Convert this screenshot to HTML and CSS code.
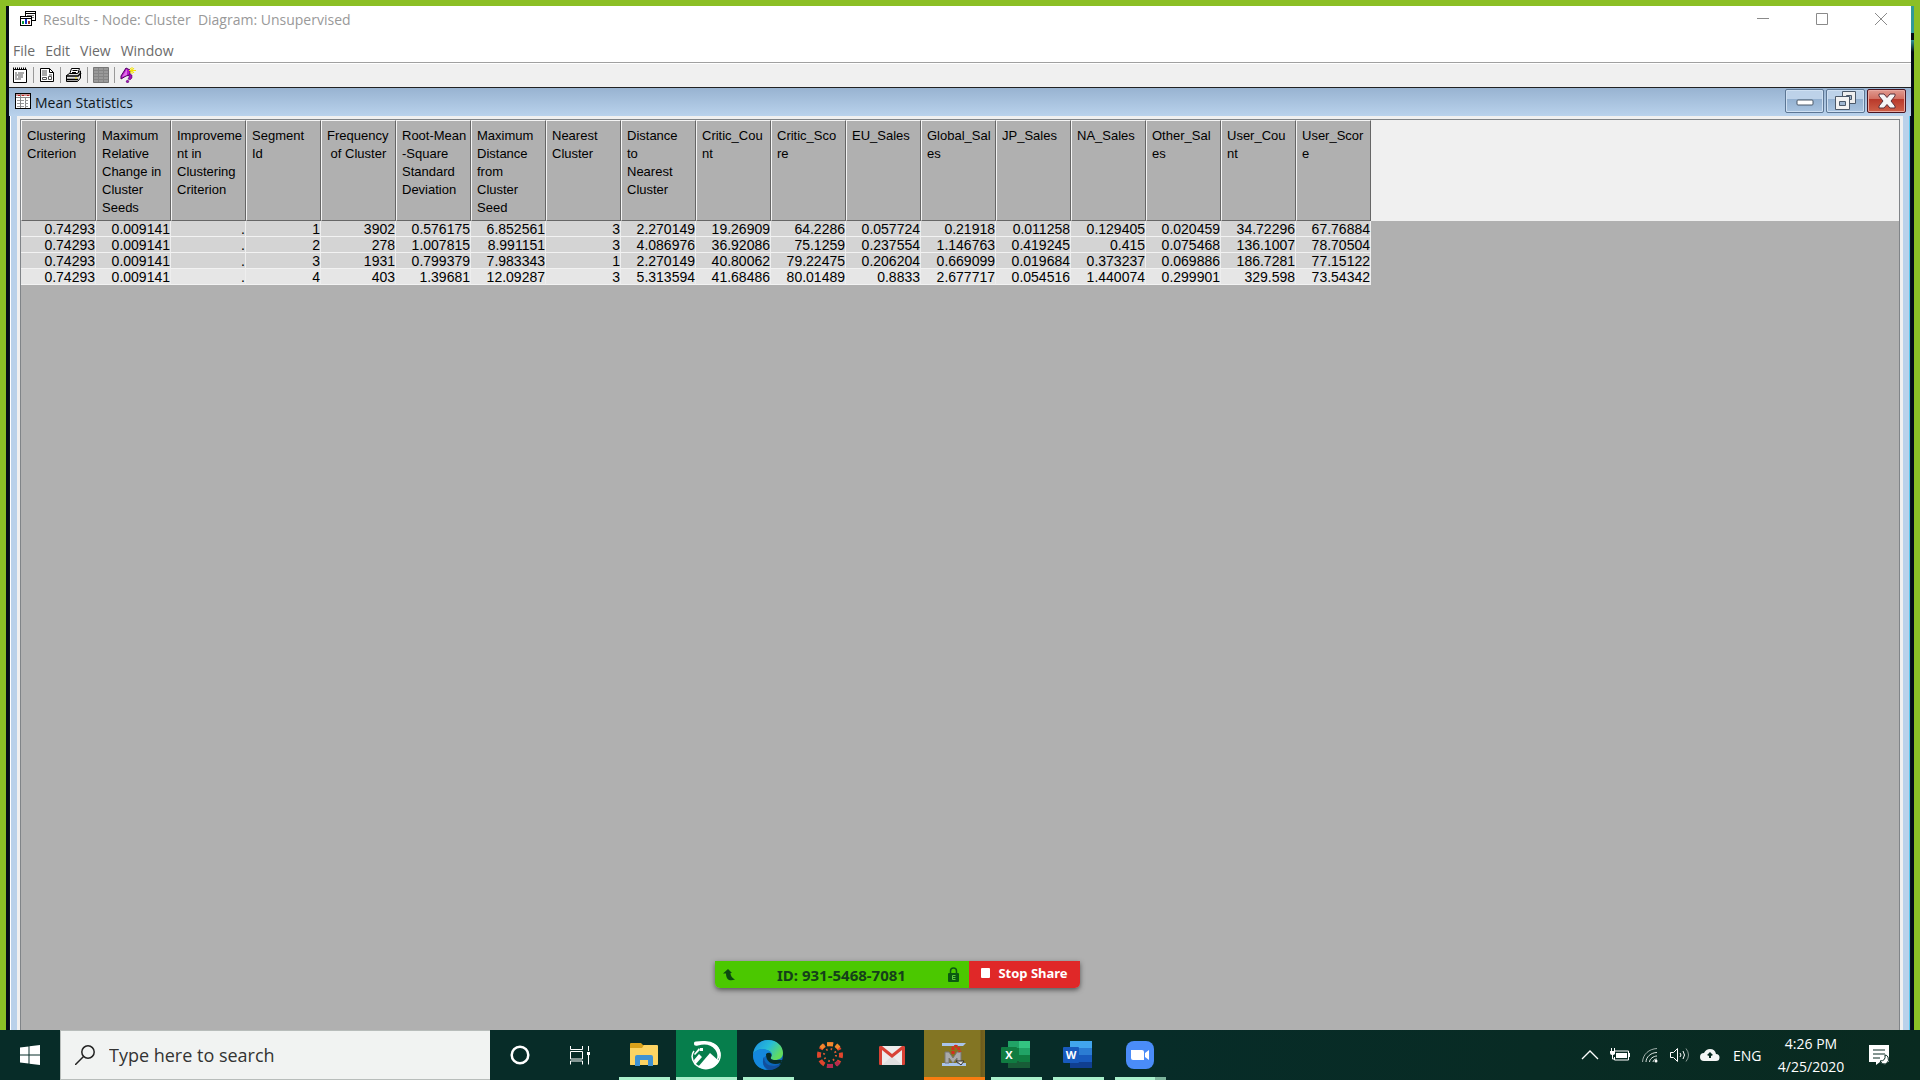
FILE: index.html
```html
<!DOCTYPE html>
<html lang="en">
<head>
<meta charset="utf-8">
<title>Results - Node: Cluster  Diagram: Unsupervised</title>
<link rel="stylesheet" href="styles.css">
</head>
<body>
<div class="desktop">
  <main class="window">
    <header class="titlebar">
      <svg class="app-icon" viewBox="0 0 16 16" shape-rendering="crispEdges"><path d="M5 .5h10.500v9H5zM5 2h10" fill="#fff" stroke="#000"/><path d="M7 4h7M12 6h2" stroke="#777"/><path d="M.5 5.500h11v9H.5z" fill="#fff" stroke="#000" stroke-width="1.500"/><path d="M0 7h12" stroke="#000"/><path d="M2 10h2v3H2z" fill="#0a9a3c"/><path d="M5 8h2v5H5z" fill="#1230c8"/><path d="M8 10h2v3H8z" fill="#a03020"/></svg>
      <h1 class="title">Results - Node: Cluster&nbsp; Diagram: Unsupervised</h1>
      <div class="controls">
        <button class="ctl" aria-label="Minimize"><svg viewBox="0 0 12 12"><path d="M0 5.500h12"/></svg></button>
        <button class="ctl" aria-label="Maximize"><svg viewBox="0 0 12 12"><path d="M.5.5h11v11H.5z"/></svg></button>
        <button class="ctl" aria-label="Close"><svg viewBox="0 0 12 12"><path d="M0 0l12 12M12 0L0 12"/></svg></button>
      </div>
    </header>
    <nav class="menu">
      <button>File</button><button>Edit</button><button>View</button><button>Window</button>
    </nav>
    <div class="toolbar">
      <button aria-label="Properties"><svg viewBox="0 0 16 16"><path d="M1.500 2.500h13v13h-13z" fill="#fff" stroke="#000"/><path d="M1 1.500h14" stroke="#000" stroke-width="2" stroke-dasharray="1 1"/><path d="M3 6h2M6 6h6M3 8h8M3 10h2M6 10h5M3 12h6" stroke="#555"/></svg></button>
      <button aria-label="Report"><svg viewBox="0 0 16 16"><path d="M1.500 1.500h9l4 4v9h-13z" fill="#fff" stroke="#000"/><path d="M10.500 1.500v4h4" fill="none" stroke="#000"/><path d="M3 4h5M3 6h5M3 8h5M10 8h3" stroke="#555"/><path d="M3.500 10.500h4v2h-4zM9.500 9.500h3v3h-3z" fill="none" stroke="#555"/></svg></button>
      <button aria-label="Print"><svg viewBox="0 0 16 16"><path d="M5.500 1.500h8l-2 6h-8z" fill="#fff" stroke="#000"/><path d="M6.500 3.500h5M6 5.500h4" stroke="#000"/><path d="M.5 8.500l3-2h8l3-2.500v7l-3 3.500H.5z" fill="#ddd" stroke="#000"/><path d="M0 9h12l3-3M1 12.500h11" fill="none" stroke="#000" stroke-width="1.500"/><path d="M9 11h2" stroke="#ffe600"/></svg></button>
      <button aria-label="Table" disabled><svg viewBox="0 0 16 16"><path d="M.5.5h15v15H.5z" fill="#999" stroke="#777"/><path d="M1 3.500h14M1 6.500h14M1 9.500h14M1 12.500h14M5.500 1v14M10.500 1v14" stroke="#858585"/></svg></button>
      <button aria-label="Help"><svg viewBox="0 0 16 16"><path d="M6 1l4 2v5l-4 1-5 3V9z" fill="#b818c8" stroke="#500060"/><path d="M2 10l5-8v6z" fill="#e070e8"/><path d="M9 7l3 1v3l-2 2-2-1 1-2zM7 13l2 1-1 2-2-1z" fill="#a010b8" stroke="#500060" stroke-width=".5"/><path d="M12 0v7M9 3.500h7M10 1l4 5M14 1l-4 5" stroke="#f4e400"/></svg></button>
    </div>
    <section class="mdi">
      <header class="mdi-title">
        <svg class="mdi-icon" viewBox="0 0 16 16" shape-rendering="crispEdges"><path d="M.5.5h15v15H.5z" fill="#fff" stroke="#000"/><path d="M1 2h14" stroke="#c99" stroke-width="2"/><path d="M3 2h2M7 2h2M12 2h2" stroke="#b22" stroke-width="1"/><path d="M1 4.500h14M5.500 1v14M10.500 4v11" stroke="#888"/><path d="M2 7.500h12M2 10.500h12M2 13.500h12" stroke="#999" stroke-dasharray="3 1"/></svg>
        <h2 class="title2">Mean Statistics</h2>
        <div class="mdi-controls">
          <button class="mbtn" aria-label="Minimize table"><svg viewBox="0 0 18 22"><rect x="1" y="10" width="16" height="5" rx="1" fill="#fff" stroke="#4b5868"/></svg></button>
          <button class="mbtn" aria-label="Restore table"><svg viewBox="0 0 22 22"><path d="M7.500 1.500h13v12h-13z" fill="#eee" stroke="#4b5868"/><path d="M11.500 5.500h5v4h-5z" fill="#9fb6d0" stroke="#4b5868"/><path d="M.5 6.500h14v13H.5z" fill="#f2f2f2" stroke="#4b5868"/><path d="M4.500 11.500h6v4h-6z" fill="#9fb6d0" stroke="#4b5868"/></svg></button>
          <button class="mbtn close" aria-label="Close table"><svg viewBox="0 0 18 22"><path d="M1 4h5l3 3.500L12 4h5v2l-4 5 4 5v2h-5l-3-3.500L6 18H1v-2l4-5-4-5z" fill="#f6f6f6" stroke="#59303a"/></svg></button>
        </div>
      </header>
      <div class="mdi-body">
        <div class="sheet">
          <table class="stats">
            <thead><tr>
              <th>Clustering<br>Criterion</th><th>Maximum<br>Relative<br>Change in<br>Cluster<br>Seeds</th><th>Improveme<br>nt in<br>Clustering<br>Criterion</th><th>Segment<br>Id</th><th>Frequency<br>&nbsp;of Cluster</th><th>Root-Mean<br>-Square<br>Standard<br>Deviation</th><th>Maximum<br>Distance<br>from<br>Cluster<br>Seed</th><th>Nearest<br>Cluster</th><th>Distance<br>to<br>Nearest<br>Cluster</th><th>Critic_Cou<br>nt</th><th>Critic_Sco<br>re</th><th>EU_Sales</th><th>Global_Sal<br>es</th><th>JP_Sales</th><th>NA_Sales</th><th>Other_Sal<br>es</th><th>User_Cou<br>nt</th><th>User_Scor<br>e</th>
            </tr></thead>
            <tbody>
              <tr><td>0.74293</td><td>0.009141</td><td>.</td><td>1</td><td>3902</td><td>0.576175</td><td>6.852561</td><td>3</td><td>2.270149</td><td>19.26909</td><td>64.2286</td><td>0.057724</td><td>0.21918</td><td>0.011258</td><td>0.129405</td><td>0.020459</td><td>34.72296</td><td>67.76884</td></tr>
              <tr><td>0.74293</td><td>0.009141</td><td>.</td><td>2</td><td>278</td><td>1.007815</td><td>8.991151</td><td>3</td><td>4.086976</td><td>36.92086</td><td>75.1259</td><td>0.237554</td><td>1.146763</td><td>0.419245</td><td>0.415</td><td>0.075468</td><td>136.1007</td><td>78.70504</td></tr>
              <tr><td>0.74293</td><td>0.009141</td><td>.</td><td>3</td><td>1931</td><td>0.799379</td><td>7.983343</td><td>1</td><td>2.270149</td><td>40.80062</td><td>79.22475</td><td>0.206204</td><td>0.669099</td><td>0.019684</td><td>0.373237</td><td>0.069886</td><td>186.7281</td><td>77.15122</td></tr>
              <tr><td>0.74293</td><td>0.009141</td><td>.</td><td>4</td><td>403</td><td>1.39681</td><td>12.09287</td><td>3</td><td>5.313594</td><td>41.68486</td><td>80.01489</td><td>0.8833</td><td>2.677717</td><td>0.054516</td><td>1.440074</td><td>0.299901</td><td>329.598</td><td>73.54342</td></tr>
            </tbody>
          </table>
          <div class="header-rest"></div>
        </div>
      </div>
    </section>
  </main>
  <div class="share">
    <div class="share-id">
      <svg viewBox="0 0 12 12" width="12" height="12"><path d="M0 4.500L5 0l4 4H7.500c0 3 1.500 5 4.500 6.500-5 2-9 .5-9-6z" fill="#0b4a10"/></svg>
      <span>ID: 931-5468-7081</span>
      <svg viewBox="0 0 11 15" width="11" height="15"><path d="M2.500 7V4a3 3 0 016 0v3" fill="none" stroke="#0b5a10" stroke-width="1.500"/><rect y="6" width="11" height="9" rx="1" fill="#0b5a10"/><path d="M7.500 8.500h-3v4h3M4.500 10.500h3" fill="none" stroke="#5cc83a"/></svg>
    </div>
    <button class="stop"><i></i>Stop Share</button>
  </div>
</div>
<footer class="taskbar">
  <button class="start" aria-label="Start"><svg viewBox="0 0 20 20" width="20" height="20"><path d="M0 2.500L8.500 1.400V9.500H0zM9.500 1.300L20 0v9.500H9.500zM0 10.500h8.500v8.100L0 17.500zM9.500 10.500H20V20L9.500 18.700z" fill="#fff"/></svg></button>
  <label class="search">
    <svg viewBox="0 0 20 20" width="20" height="20"><circle cx="13" cy="7" r="6.200" fill="none" stroke="#222" stroke-width="1.500"/><path d="M8.500 11.500L0 20" stroke="#222" stroke-width="1.500"/></svg>
    <input type="text" placeholder="Type here to search" aria-label="Search">
  </label>
  <button class="sys" aria-label="Cortana"><svg viewBox="0 0 20 20" width="20" height="20"><circle cx="10" cy="10" r="8.300" fill="none" stroke="#fff" stroke-width="2.500"/></svg></button>
  <button class="sys" aria-label="Task View"><svg viewBox="0 0 20 20" width="20" height="20"><path d="M.5 1v3.500h12V1M.5 19.500V16h12v3.500M.5 6.500h12V14H.5zM18.500 1v5M18.500 10v9.500" fill="none" stroke="#fff"/><path d="M17 7h3v3h-3z" fill="#fff"/></svg></button>
  <div class="apps">
    <button class="app open" aria-label="File Explorer"><svg viewBox="0 0 32 32"><path d="M2 5q0-1 1-1h10l2 2h13q1 0 1 1v19H2z" fill="#d9a21b"/><path d="M2 9h12l2-3h13q1 0 1 1v18q0 1-1 1H3q-1 0-1-1z" fill="#fcd462"/><path d="M7 27V18q0-2 2-2h14q2 0 2 2v9h-5v-6h-8v6z" fill="#3f92d2"/></svg></button>
    <button class="app open green" aria-label="Photos"><svg viewBox="0 0 32 32"><path d="M6 5C10 3 20 2 26 7c6 6 5 14 0 18-6 5-16 5-21 0-3-4-4-9-1-13" fill="none" stroke="#fff" stroke-width="1.500"/><path d="M4 4.500c0 2 1 2.500 4 2 7-2 13-1 17 4 3 4 3 8 1 12 5-4 6-11 1-16C21 1 12 2 6 2.500 4 3 4 3 4 4.500z" fill="#fff"/><path d="M8 28l12-14 9 8c-3 8-14 11-21 6z" fill="#fff"/><path d="M10 9h3v3h-3zM4 21l5-6 3 3-7 8zM9 9L4 15l1 1 5-5z" fill="#fff"/></svg></button>
    <button class="app open" aria-label="Edge"><svg viewBox="0 0 32 32"><defs><linearGradient id="e1" x2="1" y2=".5"><stop stop-color="#1b8de0"/><stop offset=".55" stop-color="#27bcd8"/><stop offset="1" stop-color="#62dc5c"/></linearGradient></defs><circle cx="16" cy="16" r="15" fill="#0c68bd"/><path d="M1 16C2 7 8 1 16 1c9 0 15 6 15 13 0 5-4 7-8 7-3 0-5-1-4-3 2-3 0-6-4-7C9 9 3 11 1 16z" fill="url(#e1)"/><path d="M1 16c3-6 9-7 14-5 3 1 5 3 5 5-6-1-10 3-9 8 0 3 2 5 4 7C6 30 1 24 1 16z" fill="#1488dd"/><path d="M12 18c0 8 7 11 17 7-3 4-7 6-12 6-4-2-6-5-6-8 0-2 0-4 1-5z" fill="#124f9c"/><path d="M14 15c3-3 7 0 5 3-1 2 1 3 4 3h7l-1 3c-9 3-15-1-15-9z" fill="#082c28"/></svg></button>
    <button class="app" aria-label="Canvas"><svg viewBox="0 0 32 32"><g fill="none" stroke-width="4"><circle cx="16" cy="16" r="11" stroke="#e0452c" stroke-dasharray="5.800 2.840" stroke-dashoffset="2.900"/><path d="M13 5.200h6M7 9l3-3M22 6l3 3" stroke="#f08a2c"/><path d="M13 27h6M22 26l3-3" stroke="#b52b50"/></g><circle cx="16" cy="16" r="6" fill="none" stroke="#e05a32" stroke-width="2" stroke-dasharray="1.500 3.210"/></svg></button>
    <button class="app" aria-label="Gmail"><svg viewBox="0 0 32 32"><path d="M4 7h24v19H4z" fill="#ececec"/><path d="M6 26l10-9 10 9" fill="#e0e0e0"/><path d="M3 25V8q0-1 1.500-1H6l10 8L26 7h1.500Q29 7 29 8v17q0 1-1 1h-2V11l-10 8-10-8v15H4q-1 0-1-1z" fill="#d84235"/></svg></button>
    <button class="app open gold" aria-label="SAS Enterprise Miner"><svg viewBox="0 0 32 32"><path d="M4 4h24l-3 3H4zM4 24h24v3H4z" fill="#a9c4ea"/><path d="M7 24V13h4l4 6 4-6h4v11h-4v-5l-4 5-4-5v5z" fill="#aaa" stroke="#777"/><path d="M15 15V9q2-3 5-1l2 5" fill="none" stroke="#d82c20" stroke-width="3" stroke-dasharray="3 1"/><path d="M18 22h8l-3 4z" fill="#ddd" stroke="#333"/></svg></button>
    <button class="app open" aria-label="Excel"><svg viewBox="0 0 32 32"><path d="M8 2h11v9H8z" fill="#21a366"/><path d="M19 2h11v7H19z" fill="#33c481"/><path d="M8 9h11v14H8z" fill="#107c41"/><path d="M19 9h11v7H19z" fill="#21a366"/><path d="M8 22h22v7H8z" fill="#185c37"/><path d="M19 16h11v7H19z" fill="#107c41"/><rect x="1" y="8" width="16" height="16" rx="1" fill="#107c41"/></svg><b>X</b></button>
    <button class="app open" aria-label="Word"><svg viewBox="0 0 32 32"><path d="M8 2h22v7H8z" fill="#41a5ee"/><path d="M8 9h22v7H8z" fill="#2b7cd3"/><path d="M8 16h22v7H8z" fill="#185abd"/><path d="M8 23h22v6H8z" fill="#103f91"/><rect x="1" y="8" width="16" height="16" rx="1" fill="#185abd"/></svg><b>W</b></button>
    <button class="app open multi" aria-label="Zoom"><svg viewBox="0 0 32 32"><rect x="2" y="2" width="28" height="28" rx="8" fill="#4a8cf8"/><path d="M7 11h11q2 0 2 2v8H9q-2 0-2-2zM21 14l4-3v10l-4-3z" fill="#fff"/></svg></button>
  </div>
  <div class="tray">
    <svg viewBox="0 0 20 20"><path d="M2 14l8-8 8 8" fill="none" stroke="#fff" stroke-width="1.300"/></svg>
    <svg viewBox="0 0 20 20"><path d="M4.500 9V6h14v9h-14v-3" fill="none" stroke="#fff"/><path d="M6 8h11v5H6zM19 8h1v4h-1zM0 6h5v2q0 2-2 2h-1Q0 10 0 8zM1 3h1v3H1zM4 3h1v3H4z" fill="#fff"/><path d="M2.500 10v4h2" fill="none" stroke="#fff"/></svg>
    <svg viewBox="0 0 20 20"><g fill="none" stroke="#dfe6e3"><path d="M2.500 17C3 9 9 4 17 3.500" opacity=".7"/><path d="M6 17c0-5 5-9.500 11-9.500M9.500 17c0-3 4-6 7.500-6M13 17c0-2 2-3 4-3"/></g><circle cx="16" cy="16" r="1.500" fill="#fff"/></svg>
    <svg viewBox="0 0 20 20"><path d="M.5 7.500h3l4-4v13l-4-4h-3z" fill="none" stroke="#fff"/><path d="M10 8q2 2 0 4M13 6q3 4 0 8" fill="none" stroke="#fff"/><path d="M16 3.500q5 6.500 0 13" fill="none" stroke="#8a9a95"/></svg>
    <svg viewBox="0 0 20 20"><path d="M4 16a4 4 0 010-8q2-4 6-4 5 0 6 5a3.500 3.500 0 010 7z" fill="#f4f6f5"/><path d="M10 7l3 3-2 1v2H9v-2l-2-1z" fill="#092b22"/></svg>
    <span class="lang">ENG</span>
    <div class="clock"><span>4:26 PM</span><span>4/25/2020</span></div>
    <button class="notify" aria-label="Notifications"><svg viewBox="0 0 20 20"><path d="M0 0h20v17h-9l-4 3v-3H0z" fill="#fff"/><path d="M4 5h12M4 9h12M4 13h7" stroke="#092b22"/><path d="M16 10q1 6-5 6 2 4 6 3 4-3 2-7-1-2-3-2z" fill="#fff" stroke="#092b22"/></svg></button>
  </div>
</footer>
</body>
</html>
```
FILE: styles.css
```css
* { box-sizing: border-box; }
body { margin: 0; min-height: 100vh; display: flex; flex-direction: column; font-family: "Open Sans", sans-serif; background: #082c27; }
button { border: 0; padding: 0; margin: 0; background: none; font: inherit; color: inherit; }
svg { display: block; flex: none; }
.desktop { position: relative; flex: 1; display: flex; border: 6px solid #8cbf26; border-bottom: 0; padding: 0 3px; background: linear-gradient(#2f9a98 27px, #050c18 27px 34px, #2f9a98 34px, #050c18 46px) right top / 3px 100% no-repeat #050c18; }
.window { flex: 1; min-width: 0; display: flex; flex-direction: column; background: #fff; }

.titlebar { display: flex; align-items: center; height: 26px; padding: 0 1px 0 11px; }
.app-icon { width: 16px; height: 16px; }
.title { flex: 1; margin: 0 0 0 7px; font-size: 14px; font-weight: 400; color: #999; }
.controls { display: flex; }
.ctl { width: 59px; height: 26px; display: grid; place-items: center; }
.ctl svg { width: 12px; height: 12px; fill: none; stroke: #8a8a8a; }
.menu { display: flex; align-items: center; gap: 10px; height: 31px; padding: 8px 4px 0; border-bottom: 1px solid #a0a0a0; font-size: 14px; line-height: 20px; color: #6b6b6b; }
.toolbar { display: flex; align-items: center; height: 25px; padding: 0 0 2px 3px; background: #f0f0f0; border-top: 1px solid #fff; border-bottom: 1px solid #222; }
.toolbar button { padding-right: 5px; margin-right: 5px; border-right: 1px solid #999; }
.toolbar button:last-child { border: 0; }
.toolbar svg { width: 16px; height: 16px; }

.mdi { flex: 1; display: flex; flex-direction: column; background: #0a1420; }
.mdi-title { display: flex; align-items: center; height: 28px; padding: 0 5px 0 6px; background: linear-gradient(#98b3d1, #b9d2ec); }
.mdi-icon { width: 16px; height: 16px; margin-bottom: 2px; }
.title2 { flex: 1; margin: 2px 0 0 4px; font-size: 14px; line-height: 20px; font-weight: 400; color: #101820; }
.mdi-controls { display: flex; gap: 2px; align-self: flex-start; padding-top: 1px; }
.mbtn { width: 39px; height: 24px; display: grid; place-items: center; border: 1px solid #5c7694; border-radius: 2px; box-shadow: inset 0 0 0 1px #cfe0f2; background: linear-gradient(#bdd2e9 40%, #93b0d0 41%, #a9c4e0); }
.mbtn svg { height: 22px; }
.mbtn.close { border-color: #4a1420; box-shadow: inset 0 0 0 1px #e9a9a0; background: linear-gradient(#e09a90, #d27062 40%, #b8382a 41%, #cf6048); }
.mdi-body { flex: 1; display: flex; margin: 0 2px; padding: 3px 3px 0; border: solid #b9d1ea; border-width: 0 6px; background: #f0f0f0; box-shadow: -1px 0 #fff, 1px 0 #5cc8ee; }
.sheet { flex: 1; display: flex; align-items: flex-start; background: #b0b0b0; border: 1px solid #808488; border-bottom: 0; }
.header-rest { flex: 1; height: 101px; background: #f0f0f0; }

.stats { table-layout: fixed; width: 1350px; flex: none; border-collapse: separate; border-spacing: 0; font-family: "Liberation Sans", Arial, sans-serif; font-size: 14px; line-height: 14px; color: #000; }
.stats th { width: 75px; height: 101px; padding: 6px 0 0 5px; vertical-align: top; text-align: left; font-size: 13px; line-height: 18px; font-weight: 400; white-space: nowrap; border: 1px solid; border-color: #f4f4f4 #666 #666 #f4f4f4; }
.stats td { height: 16px; padding: 1px 0 0; text-align: right; background: #d4d4d4; border-right: 1px solid #eee; border-bottom: 1px solid #f2f2f2; }
.stats tr:last-child td { background: #e6e6e6; }

.share { position: absolute; left: 709px; bottom: 42px; display: flex; height: 27px; border-radius: 0 0 5px 5px; overflow: hidden; box-shadow: 0 2px 5px #555; }
.share-id { display: flex; align-items: center; justify-content: space-between; width: 254px; padding: 0 10px 0 8px; background: #4bc800; color: #14401a; font: 700 15px "Noto Sans", sans-serif; }
.stop { display: flex; align-items: center; justify-content: center; gap: 8px; width: 111px; padding-bottom: 3px; background: #e02828; color: #fff; font: 700 13px "Noto Sans", sans-serif; }
.stop i { width: 9px; height: 10px; border-radius: 1px; background: #fff; }

.taskbar { display: flex; height: 50px; background: linear-gradient(90deg, #072c28 60%, #092a20); color: #fff; }
.start, .sys { width: 60px; display: grid; place-items: center; }
.search { display: flex; align-items: center; gap: 14px; width: 430px; padding-left: 14px; background: #f1f3f2; border: 1px solid #b8bdbb; border-width: 1px 0 1px 1px; }
.search input { flex: 1; min-width: 0; border: 0; padding: 0; background: none; outline: 0; font: 18px "Open Sans", sans-serif; color: #333; }
.search input::placeholder { color: #333; opacity: 1; }
.apps { display: flex; padding-left: 3px; }
.app { position: relative; width: 62px; display: grid; place-items: center; }
.app svg { width: 32px; height: 32px; }
.app b { position: absolute; left: 16px; top: 17px; width: 16px; text-align: center; font-size: 11px; line-height: 16px; }
.app.open::after { content: ""; position: absolute; left: 6px; right: 5px; bottom: 0; height: 3px; background: #a9f0cb; }
.app.green { background: linear-gradient(#067e4c, #067e4c) 1px 0 no-repeat; }
.app.green::after, .app.gold::after { left: 1px; right: 0; }
.app.gold { background: linear-gradient(90deg, #837523 56px, #6b5a1c 57px, #7b6820) 1px 0 no-repeat; }
.app.gold::after { background: #f77c10; }
.app.multi::after { background: linear-gradient(90deg, #a9f0cb 40px, #7cb59c 40px); }
.tray { display: flex; align-items: center; margin-left: auto; padding-right: 31px; }
.tray svg { width: 20px; height: 20px; margin-right: 10px; }
.lang { width: 30px; margin-left: 3px; font-size: 14px; }
.clock { display: flex; flex-direction: column; align-items: center; width: 70px; margin: 0 23px 0 13px; font-size: 14px; line-height: 23px; }
.tray .notify svg { margin: 0; }
```
